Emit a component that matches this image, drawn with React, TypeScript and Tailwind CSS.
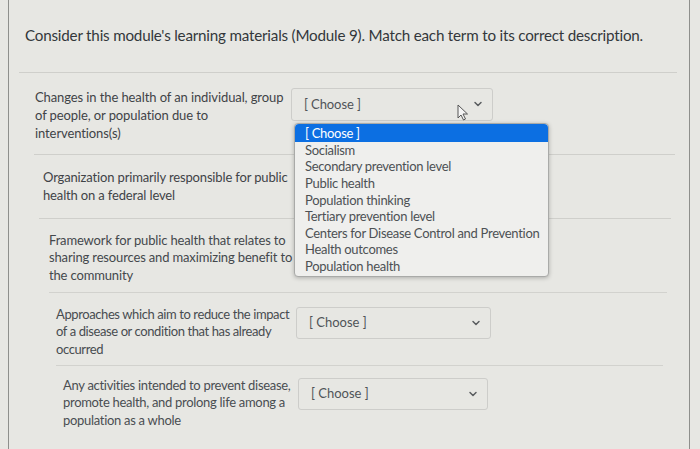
import { ChevronDown } from 'lucide-react';

const options = [
  '[ Choose ]',
  'Socialism',
  'Secondary prevention level',
  'Public health',
  'Population thinking',
  'Tertiary prevention level',
  'Centers for Disease Control and Prevention',
  'Health outcomes',
  'Population health',
];

function Select({ className = '' }: { className?: string }) {
  return (
    <div className={`h-[32px] border border-[#cdcdca] rounded-[3px] flex items-center justify-between pl-[12px] pr-[8px] text-[13px] text-[#505458] ${className}`}>
      <span>[ Choose ]</span>
      <ChevronDown className="w-[12px] h-[12px] text-[#5a5d60]" strokeWidth={3} />
    </div>
  );
}

function Cursor() {
  return (
    <svg className="absolute left-[166px] top-[16px]" width="12" height="17" viewBox="0 0 12 17">
      <path d="M1 1 L1 14 L4 11 L6.5 16 L8.5 15 L6 10 L10.5 10 Z" fill="#f4f4f4" stroke="#555" strokeWidth="1" strokeLinejoin="round" />
    </svg>
  );
}

function Dropdown() {
  return (
    <div className="absolute left-[3px] top-[35px] w-[255px] bg-[#efefed] border border-[#a9aaa8] rounded-[4px] shadow-[0_1px_4px_rgba(0,0,0,0.25)] z-10 pb-[1px] whitespace-nowrap tracking-[-0.3px]">
      {options.map((o, i) => (
        <div
          key={o}
          className={
            i === 0
              ? 'h-[18px] leading-[18px] px-[10px] bg-[#0c6fe2] text-white rounded-t-[4px]'
              : 'h-[16.6px] leading-[16.6px] px-[10px] text-[#4d5154]'
          }
        >
          {o}
        </div>
      ))}
    </div>
  );
}

export default function App() {
  return (
    <div className="w-[700px] h-[449px] overflow-hidden bg-[#e7e7e3] text-[#3c4045]" style={{ fontFamily: 'Lato, "Open Sans", sans-serif' }}>
      <div className="ml-[8px] mr-[10px] h-full border-l border-r border-[#8e8f8c]">
        <div className="pt-[24px] pb-[25px] pl-[16px] text-[15.2px] tracking-[-0.2px] text-[#33373b] whitespace-nowrap">
          Consider this module's learning materials (Module 9). Match each term to its correct description.
        </div>
        <div className="ml-[10px] mr-[12px] border-t border-[#cfcfcb]" />

        {/* row 1 */}
        <div className="h-[81px] flex pt-[15px] pl-[26px] text-[13px] leading-[18px] tracking-[-0.1px] whitespace-nowrap">
          <div className="w-[256px] shrink-0 text-[#3f4347]">
            <div>Changes in the health of an individual, group</div>
            <div>of people, or population due to</div>
            <div>interventions(s)</div>
          </div>
          <div className="relative w-[202px]">
            <Select className="h-[33px]" />
            <Cursor />
            <Dropdown />
          </div>
        </div>
        <div className="ml-[25px] mr-[14px] border-t border-[#cfcfcb]" />

        {/* row 2 */}
        <div className="h-[63px] pt-[13px] pl-[34px] text-[13px] leading-[18px] tracking-[-0.15px] text-[#3f4347] whitespace-nowrap">
          <div>Organization primarily responsible for public</div>
          <div>health on a federal level</div>
        </div>
        <div className="ml-[30px] mr-[18px] border-t border-[#cfcfcb]" />

        {/* row 3 */}
        <div className="h-[73px] pt-[13px] pl-[40px] text-[13px] leading-[17.5px] tracking-[-0.15px] text-[#44484c] whitespace-nowrap">
          <div>Framework for public health that relates to</div>
          <div>sharing resources and maximizing benefit to</div>
          <div>the community</div>
        </div>
        <div className="ml-[40px] mr-[22px] border-t border-[#d2d2ce]" />

        {/* row 4 */}
        <div className="h-[72px] flex pt-[13px] pl-[47px] text-[13px] leading-[17.5px] tracking-[-0.4px] text-[#484c50] whitespace-nowrap">
          <div className="w-[240px] shrink-0">
            <div>Approaches which aim to reduce the impact</div>
            <div>of a disease or condition that has already</div>
            <div>occurred</div>
          </div>
          <div className="w-[195px] mt-[1px] tracking-normal">
            <Select />
          </div>
        </div>
        <div className="ml-[47px] mr-[26px] border-t border-[#d2d2ce]" />

        {/* row 5 */}
        <div className="flex pt-[11px] pl-[54px] text-[13px] leading-[17.5px] tracking-[-0.3px] text-[#4a4e52] whitespace-nowrap">
          <div className="w-[235px] shrink-0">
            <div>Any activities intended to prevent disease,</div>
            <div>promote health, and prolong life among a</div>
            <div>population as a whole</div>
          </div>
          <div className="w-[190px] mt-[1px] tracking-normal">
            <Select className="h-[31px]" />
          </div>
        </div>
      </div>
    </div>
  );
}
